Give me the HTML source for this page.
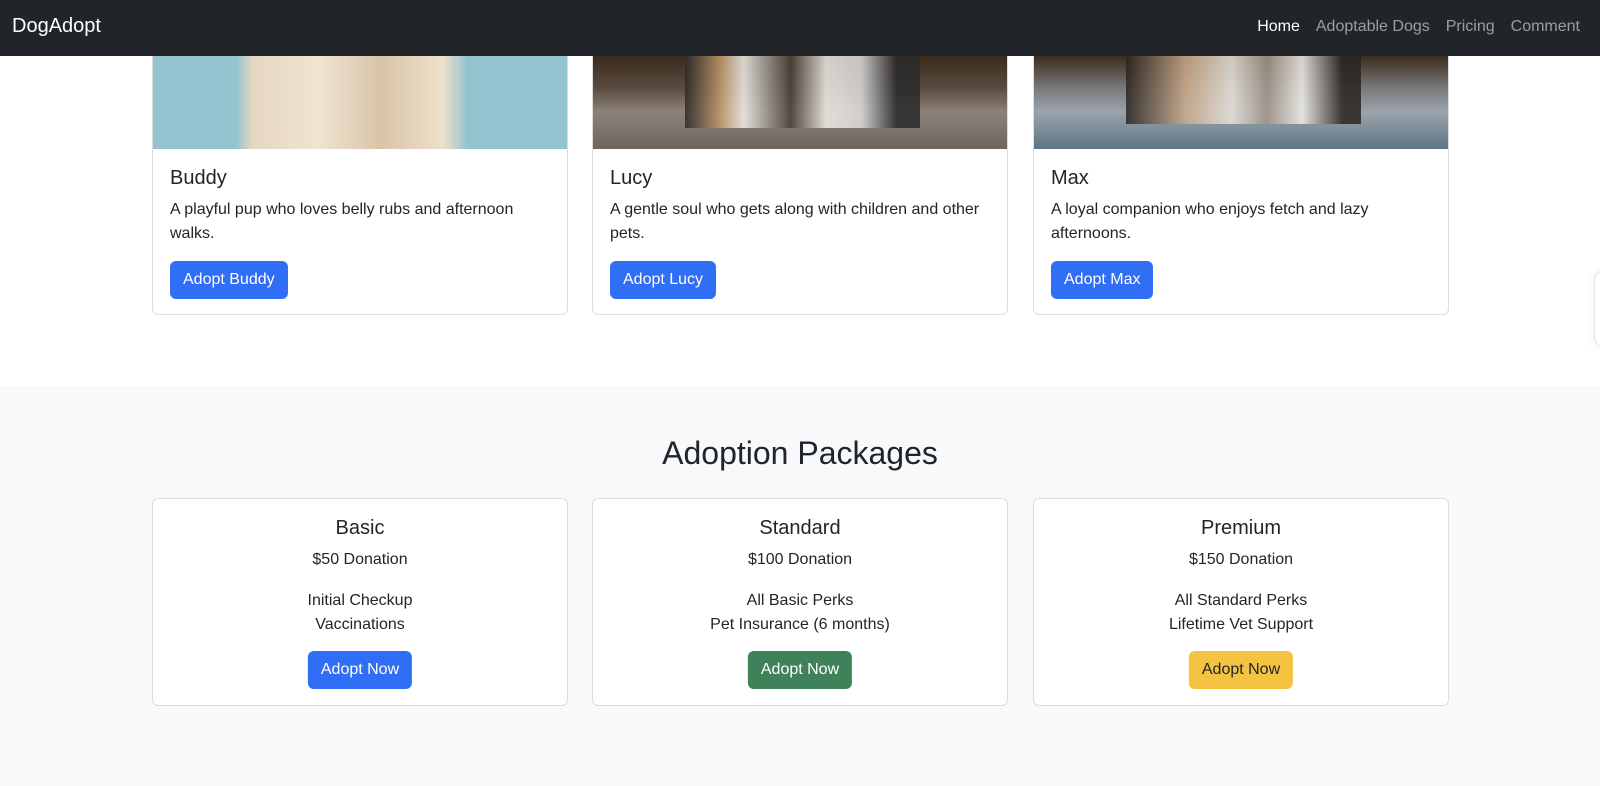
<!DOCTYPE html>
<html><head><style>
*{box-sizing:border-box;margin:0;padding:0}
body{width:1600px;height:778px;overflow:hidden;font-family:"Liberation Sans",sans-serif;color:#212529;background:#fff;position:relative}
.nav{position:absolute;top:0;left:0;width:1600px;height:56px;background:#212529;z-index:2}
.brand{position:absolute;left:12px;top:15px;color:#fff;font-size:20px}
.links{position:absolute;right:20px;top:18px;font-size:16px;color:rgba(255,255,255,.55)}
.links span{margin-left:16px}
.links .a{color:#fff}
.card{position:absolute;border:1px solid #dcdcdc;border-radius:6px;background:#fff;overflow:hidden}
.img{position:absolute;left:0;top:0;width:100%;height:93px}
.ti{position:absolute;left:17px;font-size:20px}
.tx{position:absolute;left:17px;right:16px;font-size:16px;line-height:24px}
.btn{position:absolute;height:38px;line-height:38px;padding:0 13px;border-radius:6px;color:#fff;font-size:16px;background:#316ef6}
.gray{position:absolute;top:386px;left:0;width:1600px;height:400px;background:#f8f9fa}
.pc{text-align:center}
.pc div{position:absolute;left:0;right:0}
.pc .btn{left:50%;right:auto;transform:translateX(-50%)}
</style></head><body>
<div class="nav"><div class="brand">DogAdopt</div><div class="links"><span class="a">Home</span><span>Adoptable Dogs</span><span>Pricing</span><span>Comment</span></div></div>

<div class="card" style="left:152px;top:40px;width:416px;height:275px">
<div class="img" style="top:15px;background:linear-gradient(90deg,#93c3cf 0,#93c3cf 20%,#e5d6c0 24%,#f0e4d2 40%,#d8c4a8 55%,#efe0cb 70%,#93c3cf 76%,#93c3cf)"></div>
<div class="ti" style="top:126px">Buddy</div>
<div class="tx" style="top:157px">A playful pup who loves belly rubs and afternoon walks.</div>
<div class="btn" style="left:17px;top:220px">Adopt Buddy</div></div>

<div class="card" style="left:592px;top:40px;width:416px;height:275px">
<div class="img" style="top:15px;background:linear-gradient(180deg,#3a2a1c 0,#5a4c40 35%,#8d8279 60%,#6e655d 100%)"></div>
<div style="position:absolute;left:92px;top:15px;width:235px;height:72px;background:linear-gradient(90deg,#2a2a2a 0,#c49a6c 15%,#f2f0ec 25%,#4a4038 45%,#f0ece6 60%,#ddd 75%,#2a2a2a 90%);opacity:.85"></div>
<div class="ti" style="top:126px">Lucy</div>
<div class="tx" style="top:157px">A gentle soul who gets along with children and other pets.</div>
<div class="btn" style="left:17px;top:220px">Adopt Lucy</div></div>

<div class="card" style="left:1033px;top:40px;width:416px;height:275px">
<div class="img" style="top:15px;background:linear-gradient(180deg,#3a2c20 0,#7a7a7c 35%,#9aa4ac 60%,#5f7482 100%)"></div>
<div style="position:absolute;left:92px;top:15px;width:235px;height:68px;background:linear-gradient(90deg,#2a2420 0,#c9a888 25%,#e9e4dc 45%,#a09488 60%,#f2efea 75%,#2a2420 92%);opacity:.85"></div>
<div class="ti" style="top:126px">Max</div>
<div class="tx" style="top:157px">A loyal companion who enjoys fetch and lazy afternoons.</div>
<div class="btn" style="left:17px;top:220px">Adopt Max</div></div>

<div style="position:absolute;left:1594px;top:270px;width:60px;height:77px;border:1px solid #e4e4e4;border-radius:10px;box-shadow:0 0 12px rgba(0,0,0,.06)"></div>

<div class="gray"></div>
<div style="position:absolute;top:435px;left:0;width:1600px;text-align:center;font-size:32px">Adoption Packages</div>

<div class="card pc" style="left:152px;top:498px;width:416px;height:208px">
<div style="top:18px;font-size:20px">Basic</div><div style="top:52px;font-size:16px">$50 Donation</div>
<div style="top:90px;font-size:16px;line-height:24px">Initial Checkup<br>Vaccinations</div>
<div class="btn" style="top:152px">Adopt Now</div></div>

<div class="card pc" style="left:592px;top:498px;width:416px;height:208px">
<div style="top:18px;font-size:20px">Standard</div><div style="top:52px;font-size:16px">$100 Donation</div>
<div style="top:90px;font-size:16px;line-height:24px">All Basic Perks<br>Pet Insurance (6 months)</div>
<div class="btn" style="top:152px;background:#3f8159">Adopt Now</div></div>

<div class="card pc" style="left:1033px;top:498px;width:416px;height:208px">
<div style="top:18px;font-size:20px">Premium</div><div style="top:52px;font-size:16px">$150 Donation</div>
<div style="top:90px;font-size:16px;line-height:24px">All Standard Perks<br>Lifetime Vet Support</div>
<div class="btn" style="top:152px;background:#f5c342;color:#212529">Adopt Now</div></div>
</body></html>
